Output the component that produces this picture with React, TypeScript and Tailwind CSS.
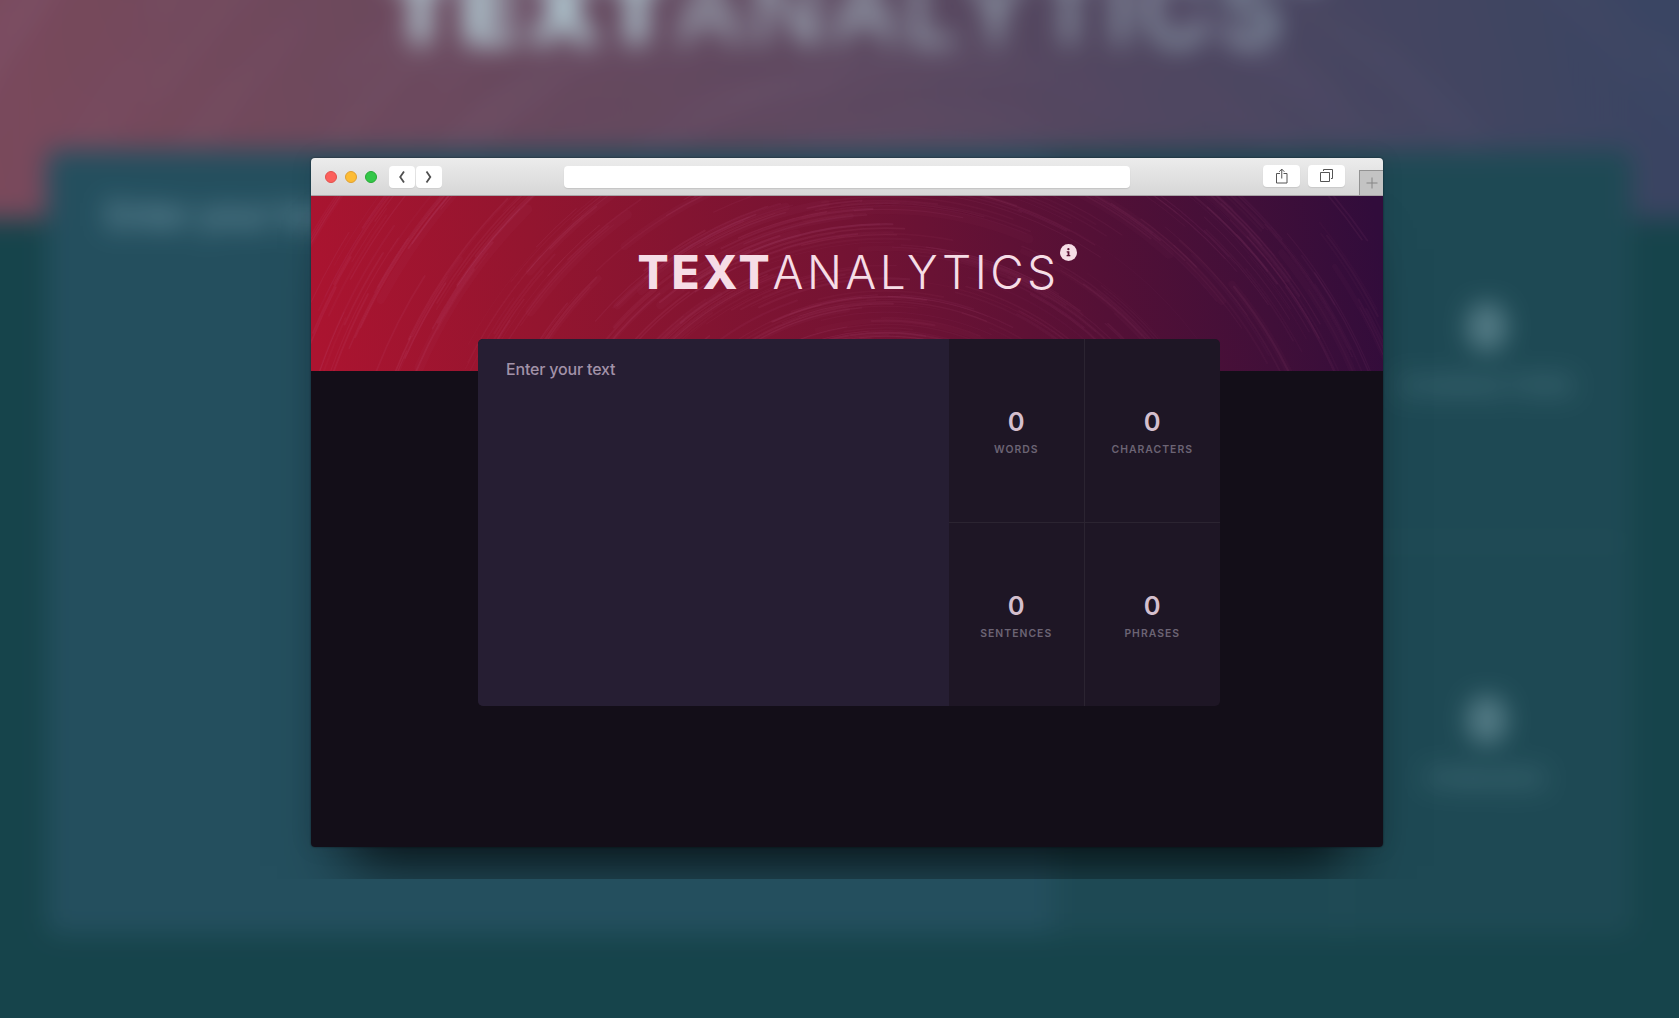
import React from "react";

type Stat = { value: number; label: string };

const STATS: Stat[] = [
  { value: 0, label: "WORDS" },
  { value: 0, label: "CHARACTERS" },
  { value: 0, label: "SENTENCES" },
  { value: 0, label: "PHRASES" },
];

/* Small deterministic generator so the brush strokes never move between renders. */
function makeRandom(seed: number) {
  let s = seed;
  return () => {
    s = (s * 1664525 + 1013904223) % 4294967296;
    return s / 4294967296;
  };
}

/* Common centre of all the brush strokes, in header coordinates. */
const CX = 575;
const CY = 374;

function buildStrokes() {
  const rand = makeRandom(2024);
  const list: { d: string; w: number; o: number }[] = [];
  const arc = (r: number, mid: number, len: number, w: number, o: number) => {
    const a = mid - len / 2;
    const b = mid + len / 2;
    const p = (t: number) =>
      `${(CX + r * Math.cos(t)).toFixed(1)} ${(CY - r * Math.sin(t)).toFixed(1)}`;
    list.push({ d: `M${p(b)}A${r.toFixed(1)} ${r.toFixed(1)} 0 0 1 ${p(a)}`, w, o });
  };
  for (let i = 0; i < 95; i++) {
    const x = rand() * 1072;
    const y = rand() * 175;
    const r0 = Math.hypot(x - CX, y - CY);
    const mid = Math.atan2(CY - y, x - CX);
    const fade = x > CX ? 0.6 : 0.85;
    if (rand() > 0.72) {
      arc(r0, mid, (120 + rand() * 140) / r0, 5 + rand() * 5, 0.045 * fade);
    }
    const strands = 1 + Math.floor(rand() * 5);
    for (let k = 0; k < strands; k++) {
      const r = r0 + k * (1.5 + rand() * 3);
      arc(r, mid + (rand() - 0.5) * 0.2, (50 + rand() * 170) / r, 0.9 + rand() * 1.3, (0.04 + rand() * 0.09) * fade);
    }
  }
  return list;
}

const STROKES = buildStrokes();

function InfoBadge() {
  return (
    <svg viewBox="0 0 17 17" className="absolute top-0 left-full size-[17px]">
      <circle cx="8.5" cy="8.5" r="8.5" fill="#f6dde6" />
      <g fill="#5a1033">
        <circle cx="8.4" cy="5.2" r="1.15" />
        <path d="M6.7 7.200h2.700v3.800h.9v1.300H6.600v-1.300h1V8.500h-.9z" />
      </g>
    </svg>
  );
}

function StatCell({ stat, className }: { stat: Stat; className: string }) {
  return (
    <div className={`flex flex-col items-center justify-center pt-[4px] ${className}`}>
      <span className="text-[25.500px] leading-[30px] font-semibold text-[#d4bfcd]">{stat.value}</span>
      <span className="mt-[5px] text-[10.4px] leading-[16px] font-semibold tracking-[1.03px] text-[#6c6474]">
        {stat.label}
      </span>
    </div>
  );
}

function AnalyticsPage() {
  return (
    <div className="flex h-[652px] w-[1072px] flex-col bg-[#130e18]">
      <header className="relative flex h-[175px] shrink-0 justify-center bg-[linear-gradient(80deg,#ac1430_0%,#93152f_22%,#741333_50%,#541036_73%,#400f39_88%,#310c3b_99%)]">
        <svg viewBox="0 0 1072 175" className="absolute inset-0 h-full w-full overflow-hidden" fill="none">
          {STROKES.map((s, i) => (
            <path key={i} d={s.d} stroke="#cc6a98" strokeWidth={s.w} strokeOpacity={s.o} strokeLinecap="round" />
          ))}
        </svg>
        <h1 className="relative mt-[48px] -mr-[3px] h-[56px] text-[46px] leading-[57px] whitespace-nowrap text-[#f6dde6]">
          <span className="font-extrabold tracking-[2.900px]">TEXT</span>
          <span className="font-light tracking-[3.450px]">ANALYTICS</span>
          <InfoBadge />
        </h1>
      </header>
      <section className="relative -mt-[32px] ml-[167px] flex h-[367px] w-[742px] overflow-hidden rounded-[5px] bg-[#1e1625]">
        <div className="w-[471px] shrink-0 bg-[#261e33] px-[28px] pt-[18px] text-[16px] leading-[24px] font-medium tracking-[-0.180px] text-[#a292a8]">
          Enter your text
        </div>
        <div className="grid flex-1 grid-cols-2 grid-rows-2">
          <StatCell stat={STATS[0]} className="border-r border-b border-[#2b2431]" />
          <StatCell stat={STATS[1]} className="border-b border-[#2b2431]" />
          <StatCell stat={STATS[2]} className="border-r border-[#2b2431]" />
          <StatCell stat={STATS[3]} className="" />
        </div>
      </section>
    </div>
  );
}

function Toolbar() {
  return (
    <div className="flex h-[38px] items-center border-b border-[#a9a5a7] bg-linear-to-b from-[#ececec] to-[#d7d7d7]">
      <div className="flex w-[78px] gap-[8px] pl-[14px]">
        <span className="size-[12px] rounded-full border border-[#e2504c] bg-[#fc605c]" />
        <span className="size-[12px] rounded-full border border-[#dfa032] bg-[#fdbc34]" />
        <span className="size-[12px] rounded-full border border-[#27a934] bg-[#33c748]" />
      </div>
      <div className="flex gap-px">
        <span className="flex h-[22px] w-[26px] items-center justify-center rounded-[4px] bg-white shadow-[0_1px_0_#cfcfcf]">
          <svg viewBox="0 0 8 12" className="h-[12px] w-[8px]" fill="none" stroke="#505050" strokeWidth="1.8">
            <path d="M6 .5 2.200 6 6 11.500" />
          </svg>
        </span>
        <span className="flex h-[22px] w-[26px] items-center justify-center rounded-[4px] bg-white shadow-[0_1px_0_#cfcfcf]">
          <svg viewBox="0 0 8 12" className="h-[12px] w-[8px]" fill="none" stroke="#505050" strokeWidth="1.8">
            <path d="M1.500.5 5.300 6 1.500 11.500" />
          </svg>
        </span>
      </div>
      <div className="ml-[122px] h-[22px] w-[566px] rounded-[4px] bg-white shadow-[0_1px_1px_#c4c4c4]" />
      <div className="mb-[2px] ml-[133px] flex gap-[8px]">
        <span className="flex h-[22px] w-[37px] items-center justify-center rounded-[4px] bg-white shadow-[0_1px_1px_#c8c8c8]">
          <svg viewBox="0 0 12 16" className="h-[16px] w-[12px]" fill="none" stroke="#555">
            <path d="M4 5.500H.5v9.500h10.500V5.500H7.500M5.750 10.500V1.200M3.200 3.800 5.750 1.100l2.600 2.700" />
          </svg>
        </span>
        <span className="flex h-[22px] w-[37px] items-center justify-center rounded-[4px] bg-white shadow-[0_1px_1px_#c8c8c8]">
          <svg viewBox="0 0 13 13" className="size-[13px]" fill="none" stroke="#555">
            <path d="M.5 3.500h9v9h-9zM3.500 2V.5h9v9H11" />
          </svg>
        </span>
      </div>
      <div className="ml-auto flex h-[25px] w-[24px] items-center justify-center self-end border-t border-l border-[#929292] bg-[#c3c3c3]">
        <svg viewBox="0 0 12 12" className="size-[12px]" stroke="#858585">
          <path d="M6 .5v11M.5 6h11" />
        </svg>
      </div>
    </div>
  );
}

export default function App() {
  return (
    <div className="relative h-[1018px] w-full overflow-hidden bg-[#16444a] font-['Inter',sans-serif]">
      {/* Enlarged, out-of-focus copy of the page behind the window */}
      <div aria-hidden="true" className="absolute inset-0 blur-[13px]">
        <div className="absolute -top-[155px] -left-[310px] origin-top-left scale-[2.136]">
          <AnalyticsPage />
        </div>
      </div>
      <div className="absolute inset-0 bg-[#20cfd0]/28" />

      <div className="relative h-[879px] overflow-hidden pt-[158px] pl-[311px]">
        <div className="w-[1072px] rounded-[4px] shadow-[0_0_2px_rgba(0,0,0,0.6),0_0_22px_rgba(0,20,30,0.1),0_55px_58px_-36px_rgba(0,0,0,0.78)]">
          <div className="h-[689px] overflow-hidden rounded-[4px]">
            <Toolbar />
            <AnalyticsPage />
          </div>
        </div>
      </div>
    </div>
  );
}
